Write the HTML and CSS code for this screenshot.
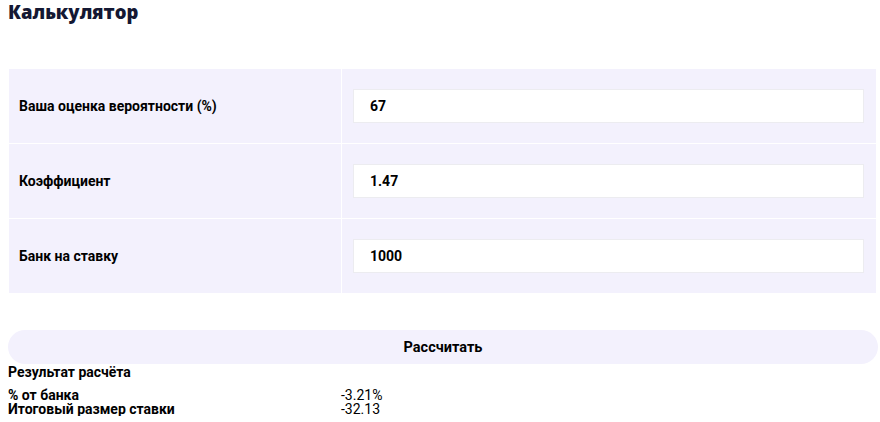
FILE: index.html
```html
<!DOCTYPE html>
<html lang="ru">
<head>
<meta charset="utf-8">
<title>Калькулятор</title>
<link rel="stylesheet" href="styles.css">
</head>
<body>
<div class="calc">
  <h2 class="calc-title">Калькулятор</h2>
  <table class="calc-table">
    <tr>
      <td class="label">Ваша оценка вероятности (%)</td>
      <td class="field"><input class="input" type="text" value="67"></td>
    </tr>
    <tr>
      <td class="label">Коэффициент</td>
      <td class="field"><input class="input" type="text" value="1.47"></td>
    </tr>
    <tr>
      <td class="label">Банк на ставку</td>
      <td class="field"><input class="input" type="text" value="1000"></td>
    </tr>
  </table>
  <button class="calc-btn" type="button">Рассчитать</button>
  <div class="result">
    <div class="result-title">Результат расчёта</div>
    <div class="result-row"><span class="r-label">% от банка</span><span class="r-value">-3.21%</span></div>
    <div class="result-row"><span class="r-label">Итоговый размер ставки</span><span class="r-value">-32.13</span></div>
  </div>
</div>
</body>
</html>
```
FILE: styles.css
```css
html, body {
  margin: 0;
  padding: 0;
  background: #fff;
}
body {
  font-family: Roboto, "Liberation Sans", sans-serif;
  color: #000;
}
.calc {
  width: 870px;
  padding-left: 8px;
}
.calc-title {
  margin: 0;
  padding-top: 1px;
  height: 68px;
  font-family: "Open Sans", "Noto Sans", sans-serif;
  font-size: 18.5px;
  font-weight: 800;
  line-height: 22px;
  color: #141833;
  box-sizing: border-box;
}
.calc-table {
  width: 869px;
  border-collapse: separate;
  border-spacing: 1px;
  margin: 0;
}
.calc-table td {
  background: #f3f1fd;
  height: 74px;
  padding: 0;
  box-sizing: border-box;
}
.label {
  width: 332px;
  padding-left: 10px !important;
  font-size: 14px;
  font-weight: 700;
}
.field {
  padding: 0 12px 0 11px !important;
}
.input {
  display: block;
  width: 100%;
  height: 34px;
  box-sizing: border-box;
  border: 1px solid #ececf0;
  background: #fff;
  padding: 0 16px;
  font-family: Roboto, "Liberation Sans", sans-serif;
  font-size: 14px;
  font-weight: 700;
  color: #000;
  outline: none;
}
.calc-btn {
  display: block;
  margin-top: 36px;
  width: 870px;
  height: 34px;
  border: 0;
  border-radius: 17px;
  background: #f3f1fd;
  font-family: Roboto, "Liberation Sans", sans-serif;
  font-size: 14.5px;
  font-weight: 700;
  color: #000;
  padding: 0;
}
.result {
  padding-top: 1px;
}
.result-title {
  font-size: 14px;
  font-weight: 700;
  line-height: 14px;
  margin-bottom: 9px;
}
.result-row {
  display: flex;
  font-size: 14px;
  line-height: 14px;
}
.r-label {
  width: 333px;
  font-weight: 700;
}
.r-value {
  font-weight: 400;
}
```
